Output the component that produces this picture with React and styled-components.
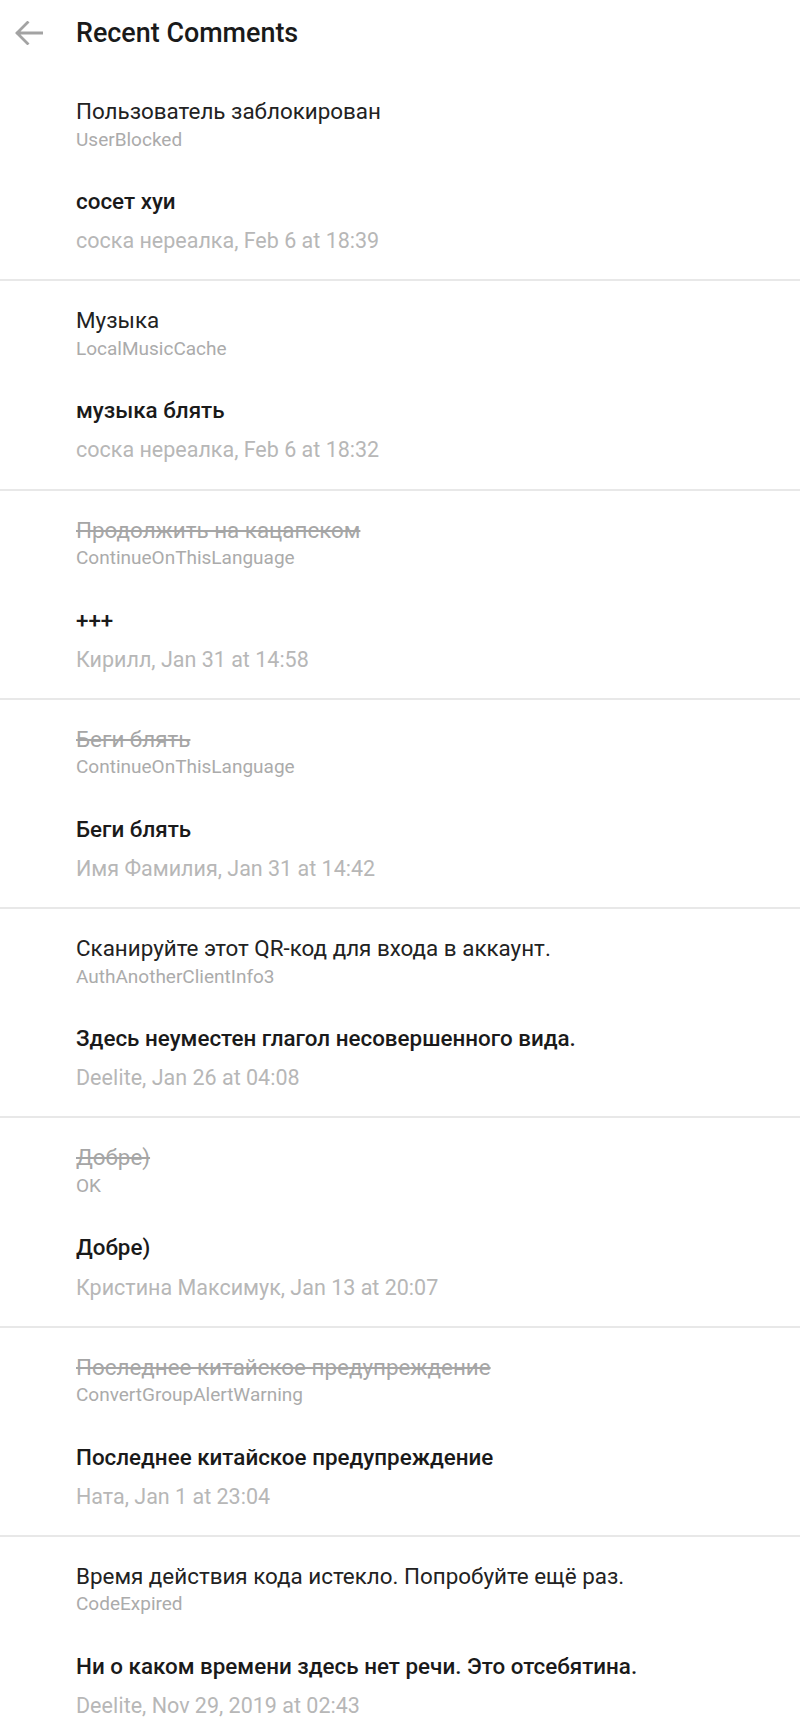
import React from "react";
import styled, { createGlobalStyle } from "styled-components";

const Global = createGlobalStyle`
  html, body { margin: 0; padding: 0; background: #ffffff; }
  body { font-family: Roboto, "Noto Sans", Arial, sans-serif; -webkit-font-smoothing: antialiased; }
`;

const Page = styled.div`
  width: 800px;
  background: #fff;
`;

const Header = styled.header`
  display: flex;
  align-items: center;
  height: 32px;
  padding: 17px 0 23px 0;
`;

const BackButton = styled.button`
  width: 76px;
  height: 32px;
  padding: 0 0 0 15px;
  border: 0;
  background: none;
  display: flex;
  align-items: center;
  cursor: pointer;
`;

const Title = styled.h1`
  margin: 0;
  font-size: 26.9px;
  line-height: 32px;
  font-weight: 500;
  color: #1a1a1a;
`;

const List = styled.ul`
  list-style: none;
  margin: 0;
  padding: 0;
`;

const Item = styled.li`
  padding: 25px 20px 25.1px 76px;
  border-bottom: 2px solid #e8e8e8;
`;

const Phrase = styled.div`
  font-size: 22.4px;
  line-height: 28px;
  color: ${(p) => (p.$deleted ? "#a6a6a6" : "#222")};
  text-decoration: ${(p) => (p.$deleted ? "line-through" : "none")};
  white-space: nowrap;
`;

const Key = styled.div`
  margin-top: 3.5px;
  font-size: 19px;
  line-height: 22px;
  color: #ababab;
`;

const Comment = styled.div`
  margin-top: 36.5px;
  font-size: 22.4px;
  line-height: 28px;
  font-weight: 500;
  color: #1a1a1a;
  white-space: nowrap;
`;

const Meta = styled.div`
  margin-top: 13.2px;
  font-size: 21.5px;
  line-height: 26px;
  color: #b7b7b7;
  white-space: nowrap;
`;

const BackArrow = () => (
  <svg width="28" height="24" viewBox="0 0 28 24" fill="none">
    <path
      d="M27 12H2.5M12.5 1.5L2 12l10.5 10.5"
      stroke="#a3a3a3"
      strokeWidth="2.8"
      strokeLinecap="square"
    />
  </svg>
);

const items = [
  {
    phrase: "Пользователь заблокирован",
    key: "UserBlocked",
    comment: "сосет хуи",
    meta: "соска нереалка, Feb 6 at 18:39",
  },
  {
    phrase: "Музыка",
    key: "LocalMusicCache",
    comment: "музыка блять",
    meta: "соска нереалка, Feb 6 at 18:32",
  },
  {
    phrase: "Продолжить на кацапском",
    deleted: true,
    key: "ContinueOnThisLanguage",
    comment: "+++",
    meta: "Кирилл, Jan 31 at 14:58",
  },
  {
    phrase: "Беги блять",
    deleted: true,
    key: "ContinueOnThisLanguage",
    comment: "Беги блять",
    meta: "Имя Фамилия, Jan 31 at 14:42",
  },
  {
    phrase: "Сканируйте этот QR-код для входа в аккаунт.",
    key: "AuthAnotherClientInfo3",
    comment: "Здесь неуместен глагол несовершенного вида.",
    meta: "Deeli\u0307te, Jan 26 at 04:08",
  },
  {
    phrase: "Добре)",
    deleted: true,
    key: "OK",
    comment: "Добре)",
    meta: "Кристина Максимук, Jan 13 at 20:07",
  },
  {
    phrase: "Последнее китайское предупреждение",
    deleted: true,
    key: "ConvertGroupAlertWarning",
    comment: "Последнее китайское предупреждение",
    meta: "Ната, Jan 1 at 23:04",
  },
  {
    phrase: "Время действия кода истекло. Попробуйте ещё раз.",
    key: "CodeExpired",
    comment: "Ни о каком времени здесь нет речи. Это отсебятина.",
    meta: "Deeli\u0307te, Nov 29, 2019 at 02:43",
  },
];

export default function App() {
  return (
    <Page>
      <Global />
      <Header>
        <BackButton aria-label="Back">
          <BackArrow />
        </BackButton>
        <Title>Recent Comments</Title>
      </Header>
      <List>
        {items.map((it, i) => (
          <Item key={i}>
            <Phrase $deleted={it.deleted}>{it.phrase}</Phrase>
            <Key>{it.key}</Key>
            <Comment>{it.comment}</Comment>
            <Meta>{it.meta}</Meta>
          </Item>
        ))}
      </List>
    </Page>
  );
}
